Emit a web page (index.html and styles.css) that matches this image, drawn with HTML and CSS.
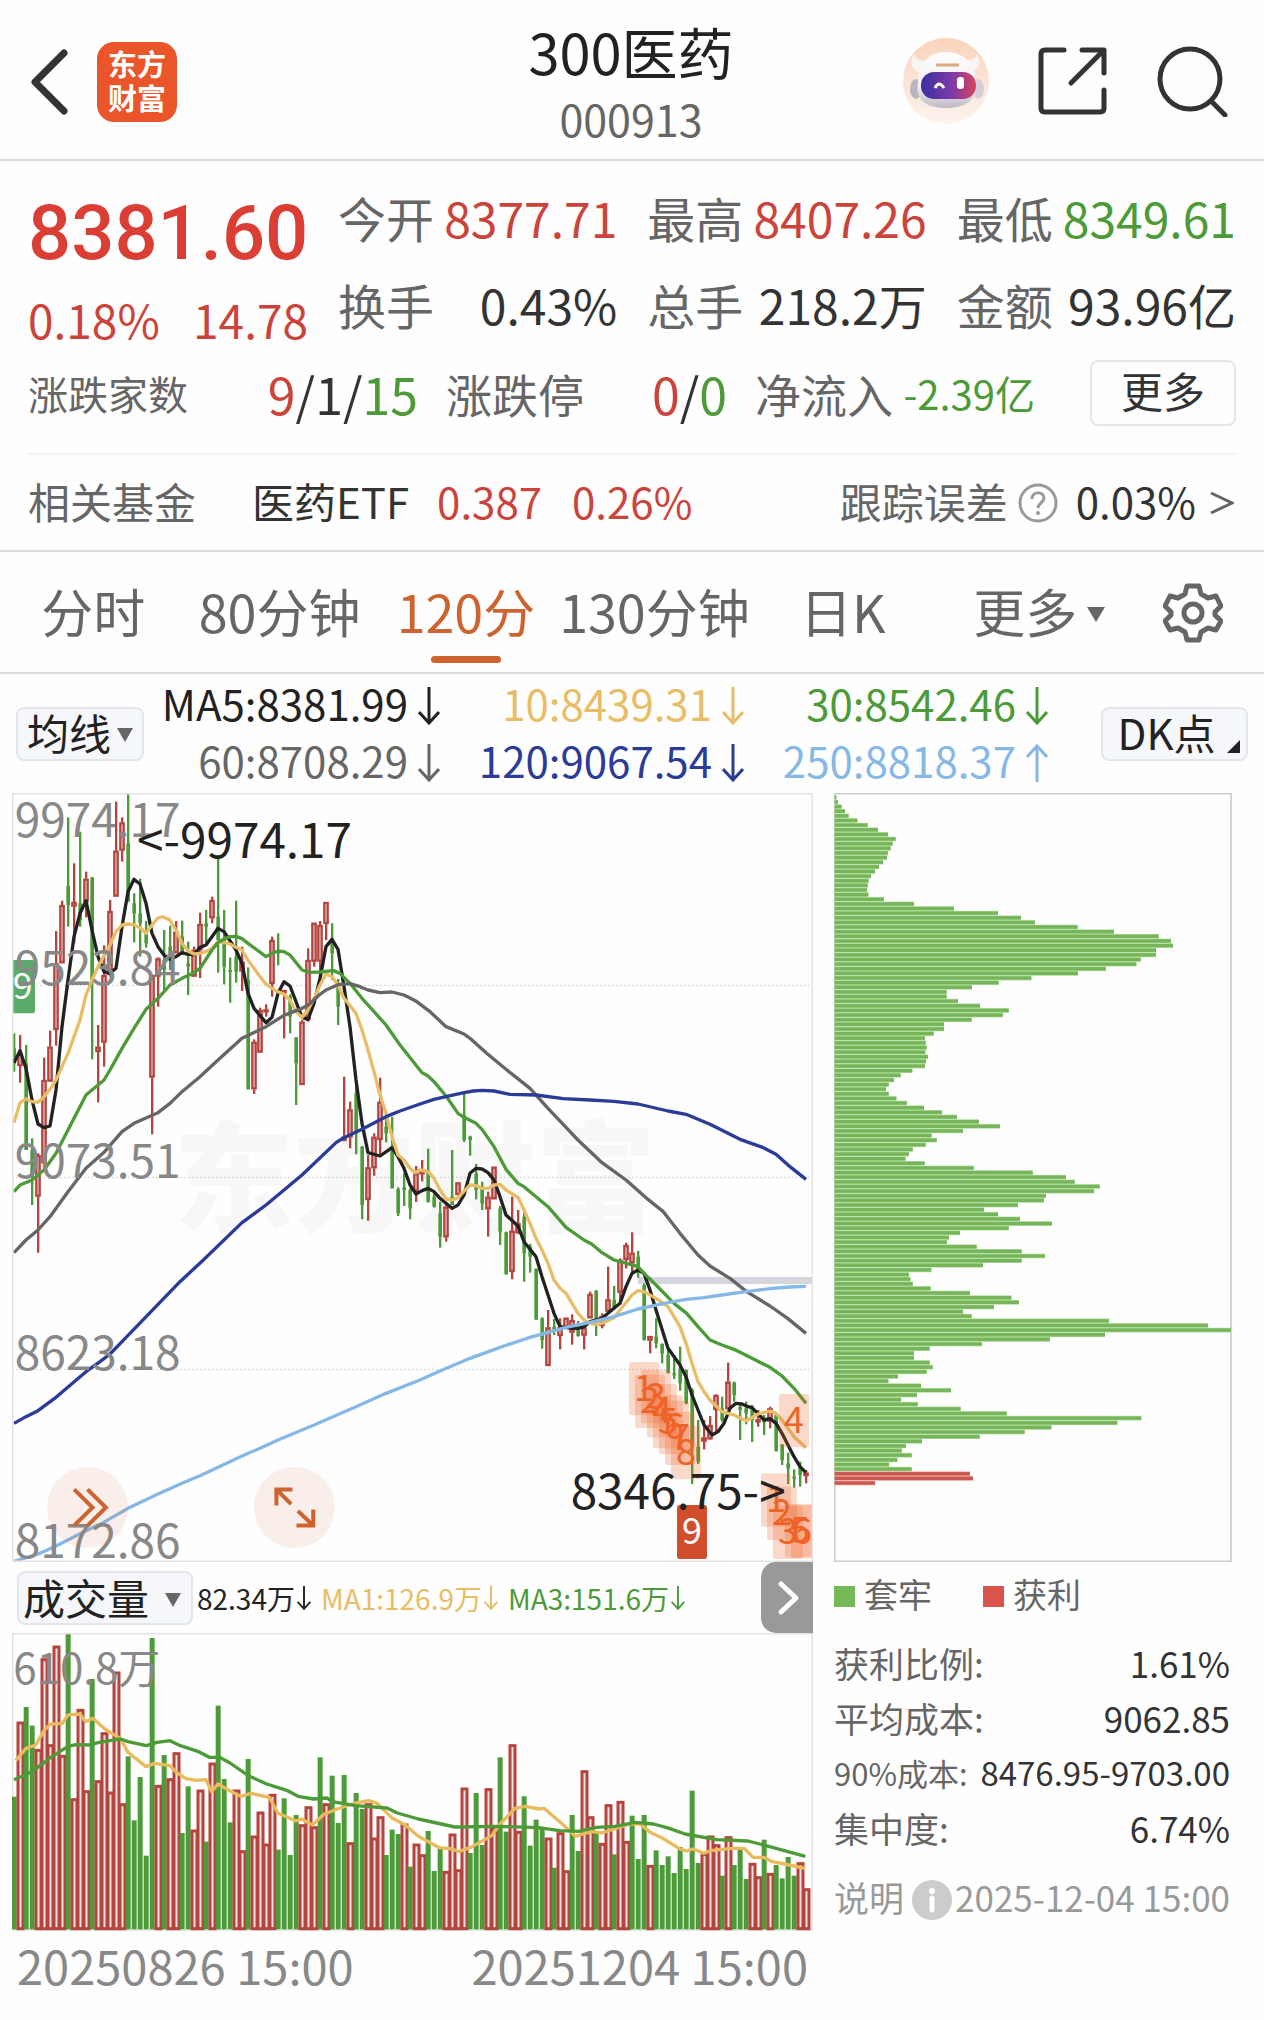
FILE: index.html
```html
<!DOCTYPE html>
<html lang="zh-CN">
<head>
<meta charset="utf-8">
<meta name="viewport" content="width=device-width, initial-scale=1">
<title>300医药 000913</title>
<link rel="stylesheet" href="styles.css">
</head>
<body>
<svg class="defs" aria-hidden="true">
  <symbol id="down" viewBox="0 0 22 38"><path d="M11 0V35M1 25L11 36L21 25" fill="none" stroke="currentColor" stroke-width="3"/></symbol>
  <symbol id="up" viewBox="0 0 22 38"><path d="M11 38V3M1 13L11 2L21 13" fill="none" stroke="currentColor" stroke-width="3"/></symbol>
</svg>

<header class="topbar">
  <div class="topbar-side">
    <button class="icon-btn" aria-label="返回"><svg class="back" viewBox="0 0 38 66"><path d="M34 4L5 33L34 62" fill="none" stroke="#333" stroke-width="7" stroke-linecap="round" stroke-linejoin="round"/></svg></button>
    <a class="logo" href="#"><span>东方</span><span>财富</span></a>
  </div>
  <div class="heading">
    <h1>300医药</h1>
    <p>000913</p>
  </div>
  <div class="topbar-side topbar-right">
    <button class="icon-btn" aria-label="助手">
      <svg class="avatar" viewBox="0 0 88 88">
        <defs>
          <linearGradient id="halo" x2="0" y2="1"><stop stop-color="#fbd3bb"/><stop offset="1" stop-color="#fdf4ef"/></linearGradient>
          <linearGradient id="visor"><stop stop-color="#3b2f9e"/><stop offset=".55" stop-color="#7a3aa8"/><stop offset="1" stop-color="#d9445c"/></linearGradient>
          <linearGradient id="shell" x2="0" y2="1"><stop stop-color="#fff"/><stop offset=".6" stop-color="#f1eef2"/><stop offset="1" stop-color="#bfbac4"/></linearGradient>
        </defs>
        <circle cx="44" cy="44" r="43" fill="url(#halo)"/>
        <path d="M18 36C9 33 7 24 12 17C14 23 20 24 26 24zM68 36C77 33 80 24 75 17C73 23 67 24 61 24z" fill="#f8f4f3"/>
        <ellipse cx="14" cy="52" rx="6" ry="10" fill="#b9b4bd"/><ellipse cx="76" cy="52" rx="6" ry="10" fill="#d3ced6"/>
        <path d="M16 46C16 26 27 15 44 15S74 26 74 46C76 62 65 71 44 71S13 62 16 46z" fill="url(#shell)"/>
        <rect x="19" y="35" width="55" height="27" rx="13" fill="url(#visor)"/>
        <path d="M33 51Q37 43 42 51" fill="none" stroke="#fff" stroke-width="3"/>
        <rect x="55" y="40" width="7" height="12" rx="3" fill="#fff"/>
        <path d="M34 28H57" stroke="#d9a982" stroke-width="3"/>
      </svg>
    </button>
    <button class="icon-btn" aria-label="分享"><svg class="share" viewBox="0 0 70 70" fill="none" stroke="#333" stroke-width="5" stroke-linecap="round" stroke-linejoin="round"><path d="M26 4H7Q3 4 3 8V62Q3 66 7 66H62Q66 66 66 62V44M44 4H66V27M65 5L33 37"/></svg></button>
    <button class="icon-btn" aria-label="搜索"><svg class="search" viewBox="0 0 72 72" fill="none" stroke="#333" stroke-width="5" stroke-linecap="round"><circle cx="34" cy="34" r="30"/><path d="M56 57L69 70"/></svg></button>
  </div>
</header>

<section class="quote">
  <div class="quote-top">
    <div class="price">
      <strong>8381.60</strong>
      <div class="change"><span>0.18%</span><span>14.78</span></div>
    </div>
    <dl class="figures">
      <div><dt>今开</dt><dd class="red">8377.71</dd></div>
      <div><dt>最高</dt><dd class="red">8407.26</dd></div>
      <div><dt>最低</dt><dd class="green">8349.61</dd></div>
      <div><dt>换手</dt><dd>0.43%</dd></div>
      <div><dt>总手</dt><dd>218.2万</dd></div>
      <div><dt>金额</dt><dd>93.96亿</dd></div>
    </dl>
  </div>
  <dl class="breadth">
    <div><dt class="small">涨跌家数</dt><dd><span class="red">9</span>/1/<span class="green">15</span></dd></div>
    <div><dt>涨跌停</dt><dd><span class="red">0</span>/<span class="green">0</span></dd></div>
    <div><dt>净流入</dt><dd class="small green">-2.39亿</dd></div>
    <div class="more-cell"><button class="more">更多</button></div>
  </dl>
</section>

<section class="fund">
  <span class="muted">相关基金</span>
  <a class="fund-name" href="#">医药ETF</a>
  <span class="red">0.387</span>
  <span class="red fund-pct">0.26%</span>
  <span class="muted fund-error">跟踪误差</span>
  <svg class="help" viewBox="0 0 40 40"><circle cx="20" cy="20" r="18" fill="none" stroke="#999" stroke-width="3"/><path d="M14 16C14 8 26 8 26 15C26 20 20 20 20 25" fill="none" stroke="#999" stroke-width="3"/><circle cx="20" cy="30" r="2" fill="#999"/></svg>
  <span>0.03%</span>
  <svg class="go" viewBox="0 0 24 24"><path d="M1 2L22 12L1 22" fill="none" stroke="#666" stroke-width="3"/></svg>
</section>

<nav class="tabs">
  <button>分时</button>
  <button>80分钟</button>
  <button class="active">120分</button>
  <button>130分钟</button>
  <button>日K</button>
  <button class="tab-more">更多<i class="tri"></i></button>
  <button aria-label="设置"><svg class="gear" viewBox="0 0 60 60" fill="none" stroke="#666" stroke-width="5" stroke-linejoin="round"><path d="M24 3H36L38 11L45 15L53 13L58 23L52 29V32L58 38L53 47L45 45L38 49L36 57H24L22 49L15 45L7 47L2 38L8 32V29L2 23L7 13L15 15L22 11Z"/><circle cx="30" cy="30" r="9"/></svg></button>
</nav>

<section class="averages">
  <button class="chip-btn">均线<i class="tri"></i></button>
  <ul class="ma">
    <li class="c5">MA5:8381.99<svg><use href="#down"/></svg></li>
    <li class="c10">10:8439.31<svg><use href="#down"/></svg></li>
    <li class="c30">30:8542.46<svg><use href="#down"/></svg></li>
    <li class="c60">60:8708.29<svg><use href="#down"/></svg></li>
    <li class="c120">120:9067.54<svg><use href="#down"/></svg></li>
    <li class="c250">250:8818.37<svg><use href="#up"/></svg></li>
  </ul>
  <button class="chip-btn dk">DK点<i class="corner"></i></button>
</section>

<main class="boards">
  <div class="left">
    <div class="kline">
      <svg id="kline" class="plot" viewBox="36 39 2403 2307" role="img" aria-label="120分K线图"></svg>
      <button class="round fast" aria-label="快进"><svg viewBox="-121 -121 242 242" fill="none" stroke="#cd6430" stroke-width="12"><path d="M-40 -54L15 0L-40 54M0 -54L55 0L0 54"/></svg></button>
      <button class="round expand" aria-label="全屏"><svg viewBox="-121 -121 242 242" fill="none" stroke="#cd6430" stroke-width="12"><path d="M-6 -54H-54V-6M-54 -54L-10 -10M56 6V54H6M56 54L10 10"/></svg></button>
    </div>
    <div class="vol-head">
      <button class="chip-btn">成交量<i class="tri"></i></button>
      <span class="c5">82.34万<svg><use href="#down"/></svg></span>
      <span class="c10">MA1:126.9万<svg><use href="#down"/></svg></span>
      <span class="c30">MA3:151.6万<svg><use href="#down"/></svg></span>
      <button class="next" aria-label="下一个"><svg viewBox="0 0 24 36"><path d="M4 4L19 18L4 32" fill="none" stroke="#fff" stroke-width="5" stroke-linecap="round" stroke-linejoin="round"/></svg></button>
    </div>
    <svg id="volume" class="plot" viewBox="36 72 2403 894" role="img" aria-label="成交量图"></svg>
    <div class="dates"><time>20250826 15:00</time><time>20251204 15:00</time></div>
  </div>

  <div class="right">
    <svg id="chips" class="plot" viewBox="42 39 1194 2307" role="img" aria-label="筹码分布"></svg>
    <div class="legend"><span><i class="sq trapped"></i>套牢</span><span><i class="sq gain"></i>获利</span></div>
    <dl class="stats">
      <div><dt>获利比例:</dt><dd>1.61%</dd></div>
      <div><dt>平均成本:</dt><dd>9062.85</dd></div>
      <div class="tight"><dt>90%成本:</dt><dd>8476.95-9703.00</dd></div>
      <div><dt>集中度:</dt><dd>6.74%</dd></div>
    </dl>
    <div class="note"><span>说明</span><svg viewBox="0 0 40 40"><circle cx="20" cy="20" r="20" fill="#ccc"/><circle cx="20" cy="11" r="3" fill="#fff"/><path d="M20 18V30" stroke="#fff" stroke-width="5" stroke-linecap="round"/></svg><time>2025-12-04 15:00</time></div>
  </div>
</main>
<script src="charts.js"></script>
</body>
</html>
```
FILE: styles.css
```css
* { box-sizing: border-box; }
body {
  margin: 0;
  background: #fefefe;
  color: #333;
  font-family: "Noto Sans CJK SC", "Noto Sans", sans-serif;
  font-size: 42px;
  line-height: 1;
  white-space: nowrap;
}
h1, p, dl, dd, ul { margin: 0; padding: 0; }
h1 { font-weight: 400; }
button { font: inherit; color: inherit; background: none; border: 0; padding: 0; }
a { color: inherit; text-decoration: none; }
svg { display: block; flex: none; }
.defs { position: absolute; width: 0; height: 0; }
.red { color: #cb443c; }
.green { color: #4c9a38; }
.muted { color: #666; }

.topbar {
  display: grid;
  grid-template-columns: 1fr auto 1fr;
  height: 161px;
  border-bottom: 2px solid #ddd;
  padding: 0 32px 0 30px;
}
.topbar-side { display: flex; align-items: center; gap: 29px; padding-top: 4px; }
.topbar-right { justify-content: flex-end; gap: 48px; padding: 2px 4px 0 0; }
.back { width: 38px; height: 66px; }
.logo {
  display: grid;
  align-content: center;
  justify-items: center;
  width: 80px;
  height: 80px;
  border-radius: 17px;
  background: #ea5529;
  color: #fff;
  font-size: 29px;
  font-weight: 700;
  line-height: 34px;
  padding-bottom: 4px;
}
.avatar { width: 88px; height: 88px; }
.share { width: 70px; height: 70px; }
.search { width: 72px; height: 72px; }
.heading { text-align: center; padding-top: 16px; }
.heading h1 { font-size: 56px; line-height: 70px; color: #222; }
.heading p { color: #666; font-size: 43px; line-height: 64px; }

.quote { padding: 13px 28px 0; }
.quote-top { display: grid; grid-template-columns: 280px 1fr; gap: 30px; }
.price { color: #db3e35; }
.price strong { display: block; font: 500 76px/118px Roboto, sans-serif; }
.change { display: flex; justify-content: space-between; font-size: 46px; line-height: 54px; color: #cb443c; }
.figures { display: grid; grid-template-columns: repeat(3, 1fr); column-gap: 30px; font-size: 48px; line-height: 87px; }
.figures > div, .breadth > div { display: flex; justify-content: space-between; }
dt { color: #666; }
.breadth {
  display: grid;
  grid-template-columns: 390fr 281fr 280fr 173fr;
  column-gap: 28px;
  font-size: 50px;
  line-height: 90px;
  padding-bottom: 15px;
  border-bottom: 2px solid #f3f3f3;
}
.breadth dt { font-size: 46px; }
.breadth .small { font-size: 40px; }
.breadth .more-cell { justify-content: flex-end; align-items: center; }
.more { width: 146px; height: 66px; border: 2px solid #e6e6e6; border-radius: 8px; font-size: 42px; line-height: 54px; padding-bottom: 6px; }

.fund { display: flex; align-items: center; height: 97px; padding: 0 30px 4px 28px; border-bottom: 2px solid #ddd; }
.fund-name { margin: 0 28px 0 56px; }
.fund-pct { margin-left: 30px; }
.fund-error { margin-left: auto; }
.help { width: 40px; height: 40px; margin: 4px 18px 0 10px; }
.go { width: 24px; height: 24px; margin: 4px 0 0 14px; }

.tabs { display: grid; grid-template-columns: repeat(6, 187fr) 142fr; height: 122px; border-bottom: 2px solid #ddd; }
.tabs button { position: relative; display: flex; align-items: center; justify-content: center; font-size: 52px; color: #666; padding-bottom: 2px; }
.tabs .active { color: #cd6430; }
.tabs .active::after { content: ""; position: absolute; left: 50%; bottom: 9px; width: 70px; height: 7px; margin-left: -35px; border-radius: 4px; background: #cd6430; }
.tabs .tab-more { padding-left: 20px; }
.tri { border: 9px solid transparent; border-top: 15px solid #666; border-bottom: 0; margin: 6px 0 0 10px; }
.gear { width: 60px; height: 60px; margin-top: 4px; }

.averages { display: grid; grid-template-columns: 128px 1fr 147px; align-items: center; height: 119px; padding: 0 16px; }
.chip-btn { position: relative; display: flex; align-items: center; justify-content: center; height: 54px; padding-bottom: 4px; border: 2px solid #e3e6eb; border-radius: 8px; background: #f6f7fa; color: #222; }
.chip-btn .tri { border-width: 14px 8px 0; margin: 6px 0 0 6px; }
.corner { position: absolute; right: 6px; bottom: 6px; border-left: 13px solid transparent; border-bottom: 13px solid #222; }
.dk { padding-right: 16px; }
.ma { display: grid; grid-template-columns: 296fr 304fr 304fr; line-height: 57px; margin-right: 53px; list-style: none; padding-bottom: 6px; }
.ma li { display: flex; justify-content: flex-end; align-items: center; gap: 10px; }
.ma svg { width: 22px; height: 38px; margin-top: 6px; }
.c5 { color: #222; }
.c10 { color: #e8bd66; }
.c30 { color: #4c9a38; }
.c60 { color: #666; }
.c120 { color: #2a3b98; }
.c250 { color: #86b8e6; }

.boards { display: grid; grid-template-columns: 801fr 398fr; gap: 21px; padding: 0 32px 0 12px; }
.plot { width: 100%; height: auto; }
.kline { position: relative; }
.round { position: absolute; bottom: 14px; width: 81px; height: 81px; border-radius: 50%; background: rgba(205, 100, 48, .1); }
.fast { left: 35px; }
.expand { left: 242px; }
.vol-head { display: flex; align-items: center; height: 71px; font-size: 28px; padding-left: 5px; }
.vol-head .chip-btn { width: 176px; font-size: 42px; margin-right: 4px; justify-content: space-between; padding: 0 10px 2px 4px; }
.vol-head .chip-btn .tri { margin-left: 0; }
.vol-head span { display: flex; align-items: center; margin-right: 10px; gap: 2px; }
.vol-head span svg { width: 14px; height: 40px; }
.next { display: grid; place-items: center; width: 52px; height: 71px; padding-left: 4px; margin-left: auto; border-radius: 15px 0 0 15px; background: #999; }
.next svg { width: 24px; height: 36px; }
.dates { display: flex; justify-content: space-between; font-size: 47px; line-height: 68px; color: #888; padding: 0 5px; }

.legend { display: flex; gap: 51px; padding-top: 10px; font-size: 34px; line-height: 44px; color: #666; }
.legend span { display: flex; align-items: center; gap: 9px; }
.sq { width: 21px; height: 21px; margin-top: 4px; }
.trapped { background: #75b856; }
.gain { background: #d9544d; }
.stats { padding-top: 19px; font-size: 35px; line-height: 55px; }
.stats > div { display: flex; justify-content: space-between; padding-right: 2px; }
.tight dd { font-size: 33px; }
.tight dt { font-size: 31px; }
.note { display: flex; align-items: center; font-size: 35px; line-height: 55px; color: #999; padding: 14px 2px 0 0; }
.note svg { width: 40px; height: 40px; margin: 6px 0 0 8px; }
.note time { margin-left: auto; }

.plot text { font-family: "Noto Sans CJK SC", "Noto Sans", sans-serif; }
.axis { fill: #888; font-size: 138px; }
.callout { fill: #222; font-size: 143px; }
.axis-vol { fill: #888; font-size: 126px; }
.mark { font-size: 108px; text-anchor: middle; }
.watermark { fill: #f7f7f7; font-size: 362px; font-weight: 900; }
```
FILE: charts.js
```js
const RED = '#b3443e', GREEN = '#4c9a38';
const X0 = 42, STEP = 18;
const rect = (x, y, w, h, attrs) => `<rect x="${x}" y="${y}" width="${w}" height="${h}" ${attrs}/>`;
const line = (pts, color, sx = 1) => {
  const n = pts.trim().split(/[\s,]+/).map(Number);
  let d = '';
  for (let i = 0; i < n.length; i += 2) d += (i ? 'L' : 'M') + Math.round(n[i] * sx) + ' ' + n[i + 1];
  return `<path d="${d}" fill="none" stroke="${color}" stroke-width="10" stroke-linejoin="round"/>`;
};

// One candle per entry: direction, high, low, body top, body bottom.
const candles = `g760,875,805,850 r765,908,820,858 g795,1110,850,1110 g1075,1275,1110,1190 r1120,1418,1125,1250 r833,1150,900,1150 r752,905,800,905 r453,797,550,750 r362,550,375,550 g112,440,318,375
r250,490,366,380 g155,440,370,420 r275,412,296,366 g292,838,292,600 r735,967,800,816 r496,860,585,788 r360,590,393,585 r65,350,212,350 r112,245,127,212 g39,365,190,365
g340,487,370,400 g296,530,400,430 g423,503,460,490 r585,1063,585,893 r532,680,535,590 g450,638,540,570 g437,570,500,520 r423,520,455,520 g422,525,470,525 g485,645,550,560
r500,590,510,590 r398,594,432,510 g390,490,430,440 r350,430,360,415 g225,578,410,480 g390,613,480,560 g533,668,570,575 g362,608,530,575 r500,633,545,575 g562,928,600,928
r778,942,785,928 r683,818,690,818 r673,710,688,694 r470,650,480,612 g460,556,510,520 r630,775,630,640 g643,760,650,710 g772,975,772,850 r720,915,725,915 r505,725,540,720
r428,560,428,545 r423,600,435,545 r366,480,366,432 g430,600,480,520 g597,735,620,680 r890,1083,1070,1083 r965,1105,988,1072 g900,1123,940,1060 g1098,1318,1100,1275 r1125,1322,1162,1260
r1060,1187,1070,1165 r893,1130,965,1080 g1010,1087,1040,1060 g1010,1225,1100,1225 g1222,1308,1228,1300 g1180,1278,1222,1230 g1225,1318,1230,1285 r1158,1266,1180,1235 r1140,1204,1174,1180 g1106,1268,1170,1265
g1240,1283,1250,1280 g1265,1403,1300,1370 r1275,1385,1280,1372 g1110,1275,1250,1275 r1207,1245,1207,1245 g940,1086,1005,1080 g1067,1127,1070,1080 g1152,1258,1180,1230 g1205,1290,1220,1270 r1235,1370,1250,1288
r1160,1258,1160,1258 g1278,1395,1285,1355 g1355,1483,1357,1483 r1250,1498,1352,1476 r1290,1362,1330,1360 g1287,1505,1310,1420 g1392,1478,1400,1430 g1465,1620,1467,1618 g1612,1706,1615,1680 r1590,1758,1642,1758
g1617,1665,1640,1655 r1615,1708,1642,1668 r1613,1642,1613,1642 r1603,1694,1620,1658 g1623,1670,1640,1668 r1630,1708,1642,1667 r1535,1615,1542,1615 g1530,1668,1533,1625 r1600,1645,1608,1638 r1460,1600,1558,1595
g1518,1585,1560,1582 r1435,1570,1440,1538 r1388,1465,1395,1440 r1357,1480,1418,1450 g1413,1493,1430,1470 g1510,1682,1515,1680 r1668,1720,1668,1682 g1615,1705,1670,1690 g1690,1750,1692,1720 g1705,1780,1725,1778
g1725,1797,1780,1785 g1700,1832,1765,1810 g1768,1873,1770,1870 g1825,2112,1830,2000 g1920,2052,2000,2045 r1920,2008,1972,1985 r1908,1980,1935,1978 r1843,1955,1845,1890 g1850,1925,1885,1920 r1748,1888,1805,1888
g1805,1865,1808,1845 g1875,1980,1880,1890 g1865,1933,1885,1900 g1875,1986,1885,1920 r1890,1940,1918,1924 g1905,1965,1920,1925 r1880,1945,1885,1925 g1900,2015,1905,2012 g1992,2055,1995,2040 g2018,2112,2050,2065
g2068,2123,2090,2095 g2045,2120,2060,2085 r2070,2110,2078,2088`.split(/\s+/);

const ma5 = '42,848 60,812 78,865 96,960 114,1032 132,1043 150,1038 168,930 186,740 204,600 222,470 240,400 258,362 276,450 294,530 312,575 330,580 348,565 366,440 384,335 402,298 420,312 438,370 456,460 474,500 492,525 510,538 528,530 546,518 564,523 582,524 600,502 618,495 636,470 654,445 672,455 708,510 726,550 744,640 762,685 798,728 816,712 834,640 852,605 870,618 888,665 906,712 924,718 942,670 960,595 978,500 996,478 1014,508 1032,620 1050,740 1068,900 1086,1030 1104,1118 1140,1128 1176,1103 1194,1130 1212,1165 1230,1215 1248,1242 1266,1232 1284,1225 1302,1235 1320,1255 1356,1285 1374,1275 1392,1245 1410,1180 1428,1165 1446,1167 1464,1178 1482,1200 1500,1250 1518,1305 1554,1338 1572,1385 1608,1430 1626,1490 1644,1545 1662,1600 1680,1640 1716,1645 1734,1645 1752,1640 1770,1625 1806,1615 1824,1600 1860,1570 1878,1520 1896,1480 1914,1470 1932,1480 1950,1530 1968,1590 2004,1705 2040,1755 2058,1790 2076,1845 2094,1890 2112,1935 2136,1965 2154,1955 2172,1930 2190,1885 2208,1870 2226,1872 2244,1880 2256,1883 2292,1920 2310,1916 2328,1930 2346,1960 2364,1995 2382,2030 2400,2060 2418,2078';
const ma10 = '42,1028 60,968 78,957 96,965 114,967 132,950 150,928 168,900 186,860 204,820 222,770 240,720 258,645 276,600 294,560 330,495 348,455 366,435 384,432 402,434 420,443 438,460 456,435 474,414 488,410 510,420 528,450 546,490 564,513 582,522 600,520 618,515 636,505 654,485 672,487 690,492 708,502 726,510 744,540 780,590 798,612 816,625 834,635 852,643 870,660 888,695 906,712 924,690 942,655 960,615 978,582 996,590 1014,615 1032,655 1068,700 1086,750 1104,810 1122,875 1140,945 1158,1000 1176,1070 1194,1125 1212,1140 1230,1165 1246,1178 1260,1170 1284,1175 1302,1195 1320,1230 1338,1257 1356,1260 1374,1253 1410,1215 1428,1217 1446,1225 1464,1225 1482,1215 1500,1213 1518,1230 1554,1252 1572,1290 1590,1330 1608,1375 1626,1410 1644,1450 1662,1500 1680,1525 1698,1540 1716,1570 1734,1600 1752,1620 1770,1630 1788,1633 1806,1630 1842,1613 1860,1590 1896,1545 1914,1532 1932,1535 1968,1555 2004,1580 2040,1640 2058,1690 2076,1750 2094,1805 2112,1835 2130,1860 2166,1895 2202,1905 2238,1922 2256,1913 2274,1902 2310,1893 2328,1900 2346,1920 2364,1945 2382,1970 2418,2003';
const ma30 = '42,1235 60,1215 96,1200 132,1170 168,1120 204,1050 258,945 294,915 312,900 330,870 366,805 402,745 438,688 474,655 510,615 546,595 582,578 600,565 636,510 654,488 672,477 690,470 708,469 726,476 744,490 798,530 816,520 834,513 852,515 870,525 906,570 930,577 960,576 1000,572 1020,580 1050,610 1086,655 1122,695 1158,735 1200,795 1266,878 1284,888 1302,905 1338,948 1374,1000 1392,1012 1428,1030 1446,1048 1482,1100 1518,1168 1554,1210 1572,1220 1608,1250 1644,1280 1698,1342 1752,1380 1776,1393 1806,1418 1842,1440 1914,1460 1932,1480 1968,1515 2022,1570 2060,1600 2094,1640 2130,1680 2166,1695 2202,1708 2256,1735 2310,1762 2346,1788 2382,1825 2418,1870';
const ma60 = '42,1418 78,1380 114,1350 150,1310 204,1235 258,1165 312,1117 366,1055 402,1030 438,1014 474,998 510,970 546,935 600,890 654,840 726,775 798,740 852,706 906,685 924,676 960,643 978,630 1014,614 1050,611 1080,620 1104,630 1140,638 1176,636 1212,645 1246,662 1290,695 1338,740 1392,762 1410,775 1460,820 1518,868 1590,925 1644,985 1734,1080 1806,1148 1878,1200 1940,1255 1990,1295 2040,1360 2094,1425 2130,1458 2190,1495 2240,1535 2310,1578 2360,1613 2418,1660';
const ma120 = '42,1930 78,1910 114,1892 168,1852 258,1775 300,1745 330,1722 366,1685 540,1505 610,1440 726,1328 798,1275 906,1185 1008,1088 1032,1073 1086,1048 1158,1010 1200,993 1260,972 1302,958 1338,950 1392,938 1420,933 1446,931 1482,933 1530,943 1608,945 1690,956 1770,960 1842,964 1914,972 2004,993 2058,1003 2130,1033 2220,1078 2290,1103 2328,1123 2370,1160 2418,1198';
const ma250 = '42,2344 120,2320 168,2298 258,2252 300,2233 384,2185 474,2142 546,2110 600,2087 726,2028 780,2005 834,1980 942,1935 1068,1880 1158,1840 1260,1800 1320,1773 1410,1735 1500,1702 1590,1672 1698,1642 1770,1627 1842,1610 1914,1587 2004,1568 2058,1558 2112,1553 2166,1545 2238,1535 2310,1526 2370,1521 2418,1519';

function drawKline() {
  let s = '<text class="watermark" x="520" y="1330">东方财富</text>';
  for (const y of [616, 1192, 1768]) s += `<path d="M36 ${y}H2439" stroke="#ccc" stroke-width="3" stroke-dasharray="5 7"/>`;
  s += rect(1914, 1491, 525, 21, 'fill="#d5d5dc"');
  candles.forEach((c, i) => {
    const x = X0 + STEP * i, [hi, lo, top, bot] = c.slice(1).split(',').map(Number);
    const h = Math.max(bot - top, 6);
    if (c[0] === 'g') {
      s += rect(x - 3, hi, 7, lo - hi, `fill="${GREEN}"`) + rect(x - 5, top, 11, h, `fill="${GREEN}"`);
    } else {
      if (hi < top) s += rect(x - 3, hi, 7, top - hi, `fill="${RED}"`);
      if (lo > bot) s += rect(x - 3, bot, 7, lo - bot, `fill="${RED}"`);
      s += rect(x - 5, top + 3, 10, Math.max(h - 6, 3), `fill="#f3dcda" stroke="${RED}" stroke-width="7"`);
    }
  });
  s += line(ma5, '#222') + line(ma10, '#e8bd66') + line(ma30, GREEN) + line(ma60, '#666') + line(ma120, '#2a3b98') + line(ma250, '#86b8e6');
  const marks = [[1, 1887, 1746], [2, 1905, 1784], [3, 1923, 1770], [4, 1941, 1812], [5, 1959, 1845], [6, 1977, 1862], [7, 1995, 1895], [8, 2013, 1938],
    [1, 2283, 2080], [2, 2301, 2120], [3, 2319, 2177], [4, 2337, 1842], [5, 2355, 2172], [6, 2373, 2175]];
  for (const [n, x, y] of marks) {
    s += rect(x, y, 90, 160, 'rx="8" fill="#ee6428" fill-opacity=".24"');
    s += `<text class="mark" x="${Math.min(x + 45, 2406)}" y="${y + 116}" fill="#ee6428">${n}</text>`;
  }
  s += rect(2031, 2175, 90, 162, 'rx="8" fill="#d04e2b"') + '<text class="mark" x="2076" y="2291" fill="#fff">9</text>';
  s += rect(28, 540, 77, 160, 'rx="8" fill="#5aaa6a"') + '<text class="mark" x="68" y="656" fill="#fff">9</text>';
  [['9974.17', 172], ['9523.84', 614], ['9073.51', 1194], ['8623.18', 1770], ['8172.86', 2334]].forEach(([t, y]) => s += `<text class="axis" x="44" y="${y}">${t}</text>`);
  s += '<text class="callout" x="1056" y="234" text-anchor="end">&lt;-9974.17</text><text class="callout" x="1712" y="2186">8346.75-&gt;</text>';
  s += rect(38, 41, 2399, 2303, 'fill="none" stroke="#e2e2e2" stroke-width="5"');
  document.getElementById('kline').innerHTML = s;
}

const volumes = `g563 r340 g294 g350 r422 r150 r408 r112 r440 g76 r570 r302 r546 g210 r516 r372 r550 r190 r585 g442 g634 g504 g740 g87 r530 g438 r510 r432 g672 g532 r664 r544 g698 r463 g290 g510 g640 r544 r726 g450 r682 r610 r706 r557 g722 g568 g738 g618 r648 r594 r654 g445 r585 g500 g642 g498 r702 g552 g600 r585 r688 r624 g738 g662 g675 r646 g773 r706 r738 g666 g786 g716 r788 r676 r783 r538 g732 g552 g708 r540 r655 g445 g668 r408 r668 g562 g710 g632 g655 r688 g776 r672 r786 g618 g726 r486 r624 g668 r704 r588 g736 r578 r698 g620 g750 g618 r770 g724 g768 g742 g792 g714 g780 g545 g762 r735 r682 r708 g800 r684 g768 g716 g810 r764 r804 g692 r794 g768 g808 g744 g800 r762 r840`.split(' ');
const vol1 = '30,455 50,418 68,408 84,365 96,345 119,343 130,318 153,315 164,338 178,328 200,360 230,388 245,430 279,473 295,463 325,470 337,490 355,508 375,514 394,512 405,548 417,525 445,550 460,562 480,553 515,565 531,612 566,636 577,630 597,648 620,615 645,600 680,582 705,575 720,582 750,628 775,648 800,682 840,716 865,720 877,728 900,715 940,680 956,645 985,598 1005,592 1030,600 1040,598 1075,645 1100,682 1120,672 1135,668 1150,672 1205,645 1225,645 1243,670 1265,686 1300,720 1312,726 1325,720 1346,733 1358,725 1400,718 1423,718 1440,745 1460,745 1475,757 1500,765 1540,778';
const vol3 = '27,512 61,488 100,442 130,412 145,407 170,408 190,400 230,390 245,398 280,410 300,400 325,395 345,410 380,428 400,445 420,445 440,462 475,500 510,525 550,545 570,562 600,570 625,567 635,578 680,590 740,597 760,612 800,630 870,654 950,652 1030,656 1070,665 1105,667 1140,655 1175,652 1215,640 1250,645 1280,658 1310,675 1370,692 1430,696 1470,712 1540,742';

function drawVolume() {
  let s = rect(38, 74, 2399, 889, 'fill="none" stroke="#e2e2e2" stroke-width="5"');
  volumes.forEach((v, i) => {
    const x = X0 + STEP * i, y = +v.slice(1);
    s += v[0] === 'g' ? rect(x - 7, y, 15, 961 - y, `fill="${GREEN}"`)
      : rect(x - 6, y + 2, 15, 957 - y, `fill="#f6e2e0" stroke="${RED}" stroke-width="9"`);
  });
  s += line(vol1, '#eabb5c', 1.569) + line(vol3, GREEN, 1.569);
  s += '<text class="axis-vol" x="40" y="224">610.8万</text>';
  document.getElementById('volume').innerHTML = s;
}

// Right edge of each price level, top to bottom; the last three are in profit.
const levels = [49,54,65,75,86,112,143,174,204,227,218,212,204,201,189,177,165,153,146,143,141,145,192,282,402,534,603,645,773,882,1016,1053,1059,1008,1008,962,949,858,774,634,536,456,380,380,414,480,566,549,455,372,372,341,315,317,320,316,324,318,315,277,242,222,206,198,206,229,261,312,366,411,477,540,429,335,350,317,278,267,256,314,461,638,738,764,839,822,678,672,594,492,534,600,696,566,420,387,381,470,605,675,605,489,334,267,271,278,332,450,574,597,522,429,455,867,1164,1233,855,690,486,329,282,282,329,338,320,234,205,303,393,291,243,293,422,560,964,892,694,614,479,306,258,245,275,232,207,275,450,459,165];

function drawChips() {
  const pitch = (2109 - 52) / (levels.length - 1);
  let s = rect(44, 41, 1189, 2303, 'fill="none" stroke="#ccc" stroke-width="5"');
  levels.forEach((edge, i) => {
    const y = 52 + pitch * i, gain = i >= levels.length - 3;
    s += rect(44, (y - 7).toFixed(1), edge - 44, 14, `fill="${gain ? '#f0a29b' : '#a9de94'}"`);
    s += rect(44, (y - 5).toFixed(1), edge - 44, 10, `fill="${gain ? '#c95850' : '#78b45c'}"`);
  });
  document.getElementById('chips').innerHTML = s;
}

drawKline();
drawVolume();
drawChips();
```
